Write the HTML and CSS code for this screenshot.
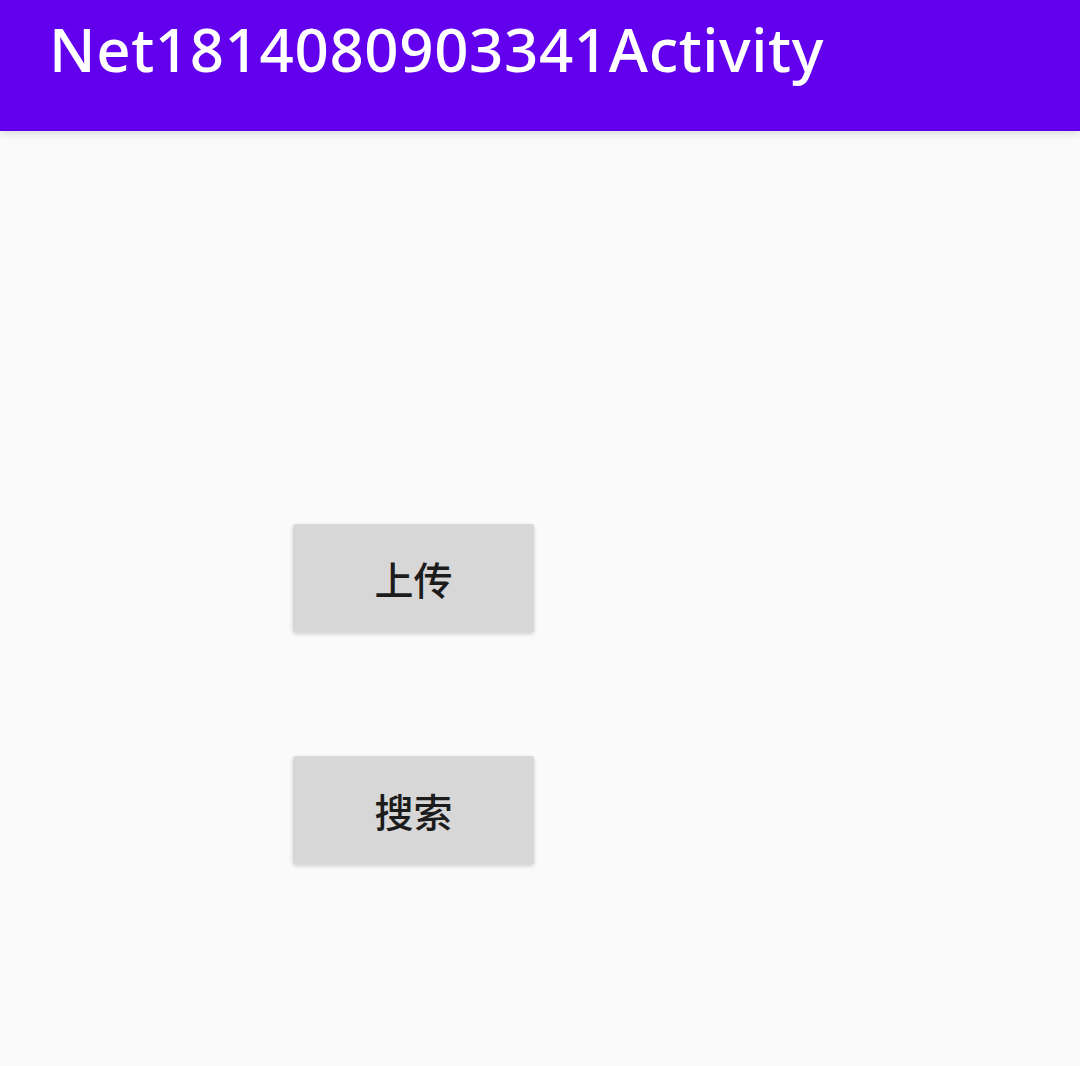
FILE: index.html
```html
<!DOCTYPE html>
<html lang="zh">
<head>
<meta charset="utf-8">
<link rel="stylesheet" href="styles.css">
</head>
<body>
<header class="appbar"><h1 class="title">Net1814080903341Activity</h1></header>
<main class="content">
  <button class="btn btn-upload">上传</button>
  <button class="btn btn-search">搜索</button>
</main>
</body>
</html>
```
FILE: styles.css
```css
html, body { margin: 0; padding: 0; }
body {
  width: 1080px;
  height: 1066px;
  background: #fafafa;
  font-family: "Noto Sans", "Noto Sans CJK SC", sans-serif;
  overflow: hidden;
}
.appbar {
  height: 131px;
  background: #6200ee;
  box-shadow: 0 3px 8px rgba(0,0,0,0.12);
  display: flex;
  align-items: flex-start;
  padding-left: 49px;
  position: relative;
  z-index: 1;
}
.title {
  margin: 0;
  margin-top: 11px;
  color: #fff;
  font-weight: 500;
  font-size: 60px;
  line-height: 76px;
  letter-spacing: 0.6px;
}
.content {
  display: flex;
  flex-direction: column;
  align-items: flex-start;
  padding-left: 293px;
  padding-top: 393px;
  gap: 124px;
}
.btn {
  width: 241px;
  height: 108px;
  border: none;
  border-radius: 3px;
  background: #d7d7d7;
  box-shadow: 0 2px 4px rgba(0,0,0,0.18);
  color: #1c1c1c;
  font-family: "Noto Sans CJK SC", sans-serif;
  font-size: 39px;
  font-weight: 500;
  padding: 0;
  display: flex;
  align-items: center;
  justify-content: center;
}
```
